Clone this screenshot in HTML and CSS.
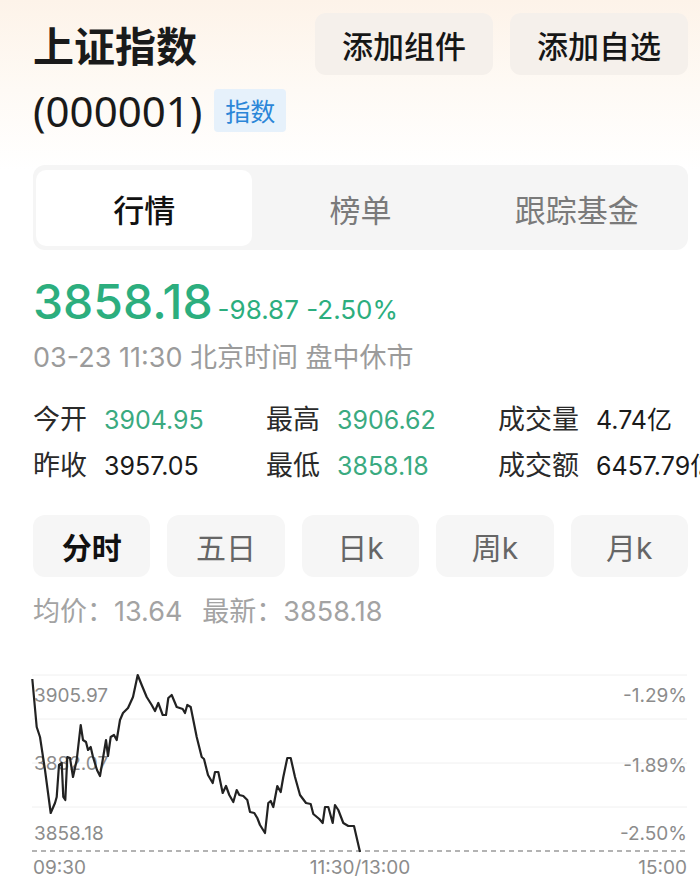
FILE: index.html
```html
<!DOCTYPE html>
<html lang="zh-CN">
<head>
    <meta charset="UTF-8">
    <meta name="viewport" content="width=device-width, initial-scale=1.0">
    <title>上证指数</title>
    <link rel="stylesheet" href="styles.css">
</head>
<body>
    <div class="page">
        <div class="header">
            <h1 class="name">上证指数</h1>
            <div class="actions">
                <button class="act">添加组件</button>
                <button class="act">添加自选</button>
            </div>
        </div>
        <div class="code-row">
            <span class="code">(000001)</span>
            <span class="badge">指数</span>
        </div>

        <div class="tabs">
            <div class="tab active">行情</div>
            <div class="tab">榜单</div>
            <div class="tab">跟踪基金</div>
        </div>

        <div class="quote">
            <span class="price">3858.18</span>
            <span class="change">-98.87 -2.50%</span>
        </div>
        <div class="time">03-23 11:30 北京时间 盘中休市</div>

        <div class="stats">
            <div class="stat"><span class="k">今开</span><span class="v green">3904.95</span></div>
            <div class="stat"><span class="k">最高</span><span class="v green">3906.62</span></div>
            <div class="stat"><span class="k">成交量</span><span class="v">4.74亿</span></div>
            <div class="stat"><span class="k">昨收</span><span class="v">3957.05</span></div>
            <div class="stat"><span class="k">最低</span><span class="v green">3858.18</span></div>
            <div class="stat"><span class="k">成交额</span><span class="v">6457.79亿</span></div>
        </div>

        <div class="periods">
            <div class="period active">分时</div>
            <div class="period">五日</div>
            <div class="period">日k</div>
            <div class="period">周k</div>
            <div class="period">月k</div>
        </div>

        <div class="avg"><span class="avg-item">均价：13.64</span><span>最新：3858.18</span></div>

        <!-- intraday chart, drawn in page coordinates -->
        <svg class="chart" viewBox="0 655 700 225" width="700" height="225">
            <line class="grid" x1="32" x2="687" y1="675" y2="675"/>
            <line class="grid" x1="32" x2="687" y1="719" y2="719"/>
            <line class="grid" x1="32" x2="687" y1="763" y2="763"/>
            <line class="grid" x1="32" x2="687" y1="807" y2="807"/>
            <line class="base" x1="32" x2="687" y1="851" y2="851"/>

            <text class="axis" x="34" y="702">3905.97</text>
            <text class="axis" x="34" y="770">3882.07</text>
            <text class="axis" x="34" y="840">3858.18</text>
            <text class="axis" x="687" y="702" text-anchor="end">-1.29%</text>
            <text class="axis" x="687" y="772" text-anchor="end">-1.89%</text>
            <text class="axis" x="687" y="840" text-anchor="end">-2.50%</text>
            <text class="axis" x="33" y="874">09:30</text>
            <text class="axis" x="360" y="874" text-anchor="middle">11:30/13:00</text>
            <text class="axis" x="687" y="874" text-anchor="end">15:00</text>

            <polyline class="line" points="32.3,679 36.7,727 40,737 45,770 50.7,813 55,803 56.7,797 59,765 61.7,763 63.3,797 65.3,800 67.3,757 70,758 73,777 76.7,760 80.7,725 83,740 86,742 88,750 90.7,747 93,757 97,770 100,776 102.7,760 106,740 108,756 110.7,737 114,735 116.7,740 120,720 123,713 128,708 133,697 137.7,675 141.7,685 146.7,697 151.7,705 155,711 158.3,703 162.7,715 166,715 168.3,698 171.7,695 176.7,707 182.7,709 185,713 187.3,705 190.7,707 196.7,737 201.7,757 204,759 208,775 212.7,783 215,772 218.3,772 222.7,793 226,786 229.3,795 233.3,802 236.7,790 239.3,795 243.3,796 247.3,800 250,812 254.3,813 257.3,818 260,825 265,833 268.3,803 270.7,801 273.3,807 277.3,786 280.7,792 283.3,777 287.3,758 290.7,758 295,777 300,795 306,803 310.7,804 313.3,814 319.3,819 322.7,823 325,807 328.3,807 332.7,823 335,805 338.3,810 343.3,823 348.3,826 354,826 360,852"/>
        </svg>
    </div>
</body>
</html>
```

FILE: styles.css
```css
body {
    margin: 0;
    width: 700px;
    overflow: hidden;
    font-family: Inter, "Noto Sans CJK SC", sans-serif;
    color: #1a1a1a;
    background: linear-gradient(180deg, #fdf3e9 0, #fefaf5 90px, #fff 170px) no-repeat;
    background-color: #fff;
}
.page {
    padding: 13px 12px 0 33px;
}
.header {
    display: flex;
    justify-content: space-between;
    align-items: center;
}
.name {
    margin: 0;
    font-family: "Noto Sans CJK SC", sans-serif;
    font-size: 41px;
    font-weight: 700;
    line-height: 62px;
}
.actions {
    display: flex;
    gap: 17px;
}
.act {
    height: 62px;
    padding: 0 27px;
    border: 0;
    border-radius: 11px;
    background-color: #f5f0eb;
    color: #161616;
    font-family: "Noto Sans CJK SC", sans-serif;
    font-size: 31px;
    font-weight: 500;
}
.code-row {
    display: flex;
    align-items: center;
    gap: 12px;
    margin-top: 14px;
    height: 43px;
}
.code {
    font-family: "Noto Sans", sans-serif;
    font-size: 42px;
    line-height: 43px;
}
.badge {
    padding: 0 11px;
    border-radius: 4px;
    background-color: #e6f1fb;
    color: #2b86d8;
    font-family: "Noto Sans CJK SC", sans-serif;
    font-size: 25px;
    line-height: 43px;
}
.tabs {
    margin-top: 33px;
    display: grid;
    grid-template-columns: repeat(3, 1fr);
    padding: 5px 3px 4px;
    border-radius: 12px;
    background-color: #f5f5f5;
}
.tab {
    height: 76px;
    display: flex;
    align-items: center;
    justify-content: center;
    border-radius: 10px;
    color: #7a7a7a;
    font-size: 31px;
}
.tab.active {
    background-color: #fff;
    color: #111;
    font-weight: 500;
}
.quote {
    margin-top: 25px;
    display: flex;
    align-items: baseline;
    gap: 5px;
    color: #2cae7e;
}
.price {
    font-size: 48px;
    line-height: 54px;
    font-weight: 500;
}
.change {
    font-size: 26px;
}
.time {
    margin-top: 11px;
    color: #9b9b9b;
    font-size: 27px;
    line-height: 36px;
}
.stats {
    margin-top: 21px;
    display: grid;
    grid-template-columns: 233px 232px auto;
}
.stat {
    display: flex;
    align-items: baseline;
    gap: 17px;
    font-size: 27px;
    line-height: 45px;
    white-space: nowrap;
}
.stat .k {
    color: #2a2a2a;
}
.stat .v {
    font-size: 25px;
}
.stat .green {
    color: #3aaa80;
}
.periods {
    margin-top: 26px;
    display: flex;
    gap: 17px;
}
.period {
    flex: 1;
    height: 62px;
    display: flex;
    align-items: center;
    justify-content: center;
    border-radius: 12px;
    background-color: #f6f6f6;
    color: #666;
    font-size: 30px;
}
.period.active {
    color: #111;
    font-weight: 700;
}
.avg {
    margin-top: 17px;
    color: #a3a3a3;
    font-size: 27px;
    line-height: 36px;
}
.avg-item {
    margin-right: 20px;
}
.chart {
    display: block;
    margin-top: 25px;
    margin-left: -33px;
}
.grid {
    stroke: #f0f0f0;
    stroke-width: 1;
}
.base {
    stroke: #9a9a9a;
    stroke-width: 1.5;
    stroke-dasharray: 5 4;
}
.axis {
    fill: #8c8c8c;
    font-family: Inter, sans-serif;
    font-size: 19px;
}
.line {
    fill: none;
    stroke: #222;
    stroke-width: 2.2;
    stroke-linejoin: round;
}
```
